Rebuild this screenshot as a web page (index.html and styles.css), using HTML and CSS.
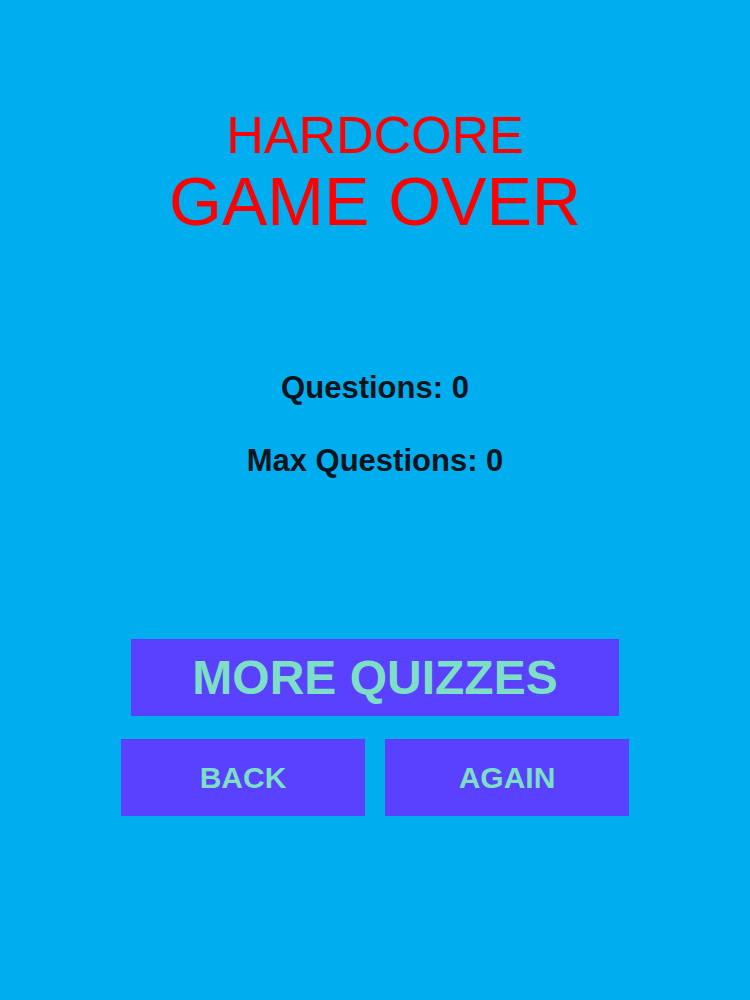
FILE: index.html
```html
<!DOCTYPE html>
<html lang="en">
<head>
    <meta charset="UTF-8">
    <title>Game Over</title>
    <link rel="stylesheet" href="styles.css">
</head>
<body>
<div class="screen">
    <div class="title">
        <p class="mode">HARDCORE</p>
        <p class="over">GAME OVER</p>
    </div>
    <div class="stats">
        <p>Questions: <span id="questions">0</span></p>
        <p>Max Questions: <span id="max">0</span></p>
    </div>
    <div class="btns">
        <button class="btn-more">MORE QUIZZES</button>
        <div class="btns-row">
            <button>BACK</button>
            <button>AGAIN</button>
        </div>
    </div>
</div>
</body>
</html>
```

FILE: styles.css
```css
html, body {
    margin: 0;
    height: 100%;
}
body {
    background-color: #00AEEF;
    font-family: "Liberation Sans", Arial, sans-serif;
}
.screen {
    display: flex;
    flex-direction: column;
    align-items: center;
    padding-top: 109px;
}
.title p {
    margin: 0;
    text-align: center;
    color: #FF0000;
}
.mode {
    font-size: 52px;
    line-height: 52px;
}
.over {
    margin-top: 6px !important;
    font-size: 68px;
    line-height: 68px;
}
.stats {
    margin-top: 137px;
}
.stats p {
    margin: 0 0 42px;
    text-align: center;
    font-size: 31px;
    line-height: 31px;
    font-weight: bold;
    color: #07141C;
}
.stats p:last-child {
    margin-bottom: 0;
}
.btns {
    margin-top: 163px;
    display: flex;
    flex-direction: column;
    align-items: center;
}
button {
    border: none;
    outline: none;
    background-color: #5941FF;
    color: #7DDFC6;
    font-family: "Liberation Sans", Arial, sans-serif;
    font-weight: bold;
    padding: 0;
    height: 77px;
}
.btn-more {
    width: 488px;
    font-size: 48px;
}
.btns-row {
    display: flex;
    gap: 20px;
    margin-top: 23px;
}
.btns-row button {
    width: 244px;
    font-size: 30px;
}
```
